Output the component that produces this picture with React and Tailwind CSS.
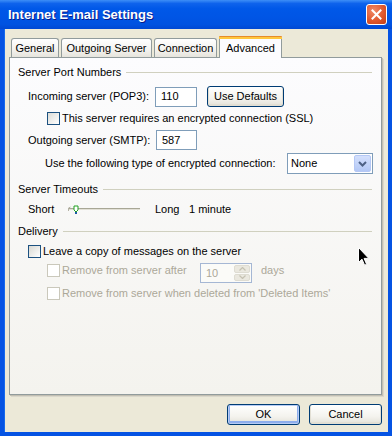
const font = "font-['Liberation_Sans',Arial,sans-serif]";

const GroupHeading = ({ label, className = "" }) => (
  <div className={`flex items-center h-[14px] ml-[8px] mr-[9px] ${className}`}>
    <span>{label}</span>
    <div className="flex-1 h-px bg-[#D0D0BF] ml-[5px]" />
  </div>
);

const Checkbox = ({ disabled, focused, className = "" }) => (
  <div
    className={`w-[13px] h-[13px] shrink-0 border ${
      disabled
        ? "border-[#CAC8BB] bg-white"
        : focused
        ? "border-[#1C5180] bg-[linear-gradient(135deg,#D8D8D2,#FFFFFF)]"
        : "border-[#1C5180] bg-[linear-gradient(135deg,#DCDCD7,#FFFFFF)]"
    } ${className}`}
  />
);

const TextBox = ({ value, className = "" }) => (
  <div
    className={`h-[20px] border border-[#7F9DB9] bg-white flex items-center pl-[5px] ${className}`}
  >
    {value}
  </div>
);

const XpButton = ({ children, isDefault, className = "" }) => (
  <div
    className={`h-[21px] rounded-[3px] border border-[#003C74] bg-[linear-gradient(to_bottom,#FFFFFF_0%,#F4F3EE_60%,#E3E1D8_100%)] flex items-center justify-center ${
      isDefault ? "shadow-[inset_0_0_0_1px_#B7CCF4,inset_0_-1px_0_2px_#8EAEEC]" : "shadow-[inset_0_-1px_0_1px_#E2DFD4]"
    } ${className}`}
  >
    {children}
  </div>
);

const Tab = ({ label, width, selected }) =>
  selected ? (
    <div
      style={{ width }}
      className="relative z-10 h-[22px] bg-[#FCFCFE] border-x border-[#919B9C] rounded-t-[3px] flex flex-col"
    >
      <div className="h-px bg-[#E68B2C] rounded-t-[3px] -mx-px" />
      <div className="h-[2px] bg-[#FFC73C] -mx-px" />
      <div className="flex-1 flex items-start justify-center pt-[1px]">{label}</div>
    </div>
  ) : (
    <div
      style={{ width }}
      className="mt-[2px] h-[19px] border border-b-0 border-[#919B9C] rounded-t-[3px] bg-[linear-gradient(to_bottom,#FFFFFF,#F3F2EE_60%,#E6E4DC)] flex items-center justify-center"
    >
      {label}
    </div>
  );

const Cursor = () => (
  <svg
    className="absolute left-[358px] top-[247px]"
    width="12"
    height="19"
    viewBox="0 0 12 19"
  >
    <path
      d="M0.5 0.5 L0.5 15.5 L4 12.2 L6.6 18.2 L8.6 17.3 L6.1 11.4 L10.8 11.4 Z"
      fill="#000"
      stroke="#fff"
      strokeWidth="1"
    />
  </svg>
);

const Slider = () => (
  <svg width="72" height="14" viewBox="0 0 72 14">
    <rect x="0" y="6" width="72" height="1" fill="#A8A796" />
    <rect x="0" y="7" width="72" height="1" fill="#E2E0D6" />
    <path d="M0.5 9 L0.5 6 L2.5 5" stroke="#B5B3A5" fill="none" />
    <path d="M6 4 L10 4 L10 8 L8 10 L6 8 Z" fill="#FFFFFF" stroke="#21A121" strokeWidth="1" />
    <rect x="7" y="10" width="2" height="2" fill="#1C5AA8" />
  </svg>
);

export default function App() {
  return (
    <div className={`relative w-[392px] h-[436px] bg-[#0553E3] flex flex-col text-[11px] text-black ${font}`}>
      {/* Title bar */}
      <div className="h-[29px] shrink-0 flex items-center pl-[8px] pr-[5px] bg-[linear-gradient(to_bottom,#3D8FF7_0%,#0E63EC_12%,#0058E8_30%,#0055E5_60%,#0052E0_85%,#0048D3_100%)]">
        <span className="flex-1 text-white font-bold text-[13px] [text-shadow:1px_1px_0_#0A1C8A]">
          Internet E-mail Settings
        </span>
        <div className="w-[21px] h-[21px] rounded-[3px] border border-white bg-[radial-gradient(circle_at_35%_30%,#F08A68,#E0582E_55%,#C23E17)] flex items-center justify-center">
          <svg width="11" height="11" viewBox="0 0 11 11">
            <path d="M1.5 1.5 L9.5 9.5 M9.5 1.5 L1.5 9.5" stroke="#fff" strokeWidth="2" strokeLinecap="square" />
          </svg>
        </div>
      </div>

      {/* Body */}
      <div className="flex-1 mx-[4px] mb-[4px] bg-[#ECE9D8] flex flex-col border-l border-[#166AEE]">
        {/* Tabs */}
        <div className="flex items-start gap-[2px] pt-[7px] h-[28px] ml-[6px]">
          <Tab label="General" width={48} />
          <Tab label="Outgoing Server" width={91} />
          <Tab label="Connection" width={63} />
          <Tab label="Advanced" width={63} selected />
        </div>

        {/* Panel */}
        <div className="ml-[4px] w-[373px] h-[338px] border border-[#919B9C] bg-[linear-gradient(to_bottom,#FCFCFE,#F4F3EE)] shadow-[1px_1px_0_#C2BFB2,2px_2px_0_#DAD7CB] flex flex-col pt-[7px]">
          <GroupHeading label="Server Port Numbers" />

          <div className="flex items-center h-[21px] mt-[7px] ml-[18px]">
            <span className="w-[127px]">Incoming server (POP3):</span>
            <TextBox value="110" className="w-[42px]" />
            <XpButton className="w-[77px] ml-[10px]">Use Defaults</XpButton>
          </div>

          <div className="flex items-center h-[13px] mt-[5px] ml-[37px]">
            <Checkbox />
            <span className="ml-[2px]">This server requires an encrypted connection (SSL)</span>
          </div>

          <div className="flex items-center h-[20px] mt-[5px] ml-[18px]">
            <span className="w-[128px]">Outgoing server (SMTP):</span>
            <TextBox value="587" className="w-[41px]" />
          </div>

          <div className="flex items-center h-[21px] mt-[3px] ml-[35px]">
            <span className="w-[242px]">Use the following type of encrypted connection:</span>
            <div className="w-[86px] h-[21px] border border-[#7F9DB9] bg-white flex items-center pl-[3px] pr-px">
              <span className="flex-1">None</span>
              <div className="w-[17px] h-[17px] rounded-[2px] border border-[#B5C8F5] bg-[linear-gradient(to_bottom,#D4E0FD,#B3C8F5)] flex items-center justify-center">
                <svg width="9" height="6" viewBox="0 0 9 6">
                  <path d="M1 1 L4.5 4.5 L8 1" stroke="#4D6185" strokeWidth="2" fill="none" />
                </svg>
              </div>
            </div>
          </div>

          <GroupHeading label="Server Timeouts" className="mt-[8px]" />

          <div className="flex items-center h-[14px] mt-[6px] ml-[18px]">
            <span className="w-[40px]">Short</span>
            <Slider />
            <span className="ml-[15px] w-[34px]">Long</span>
            <span>1 minute</span>
          </div>

          <GroupHeading label="Delivery" className="mt-[8px]" />

          <div className="flex items-center h-[13px] mt-[7px] ml-[18px]">
            <Checkbox focused />
            <span className="ml-[2px]">Leave a copy of messages on the server</span>
          </div>

          <div className="flex items-start h-[20px] mt-[5px] ml-[37px] text-[#ACA899]">
            <Checkbox disabled className="mt-[1px]" />
            <span className="ml-[2px] w-[138px] leading-[15px]">Remove from server after</span>
            <div className="w-[52px] h-[20px] border border-[#A5B7D4] bg-[#FBFBF8] flex items-center pl-[5px] pr-px">
              <span className="flex-1">10</span>
              <div className="w-[16px] h-[16px] flex flex-col gap-px">
                <div className="flex-1 rounded-[2px] bg-[#EAE8DF] border border-[#DEDCD2] flex items-center justify-center">
                  <svg width="7" height="4" viewBox="0 0 7 4">
                    <path d="M0.5 3.5 L3.5 0.5 L6.5 3.5" stroke="#C5C2B2" strokeWidth="1.2" fill="none" />
                  </svg>
                </div>
                <div className="flex-1 rounded-[2px] bg-[#EAE8DF] border border-[#DEDCD2] flex items-center justify-center">
                  <svg width="7" height="4" viewBox="0 0 7 4">
                    <path d="M0.5 0.5 L3.5 3.5 L6.5 0.5" stroke="#C5C2B2" strokeWidth="1.2" fill="none" />
                  </svg>
                </div>
              </div>
            </div>
            <span className="ml-[9px] leading-[15px]">days</span>
          </div>

          <div className="flex items-center h-[13px] mt-[4px] ml-[37px] text-[#ACA899]">
            <Checkbox disabled />
            <span className="ml-[2px]">Remove from server when deleted from 'Deleted Items'</span>
          </div>
        </div>

        {/* Dialog buttons */}
        <div className="flex justify-end gap-[9px] mt-[9px] pr-[6px]">
          <XpButton isDefault className="w-[73px]">OK</XpButton>
          <XpButton className="w-[73px]">Cancel</XpButton>
        </div>
      </div>

      <Cursor />
    </div>
  );
}
